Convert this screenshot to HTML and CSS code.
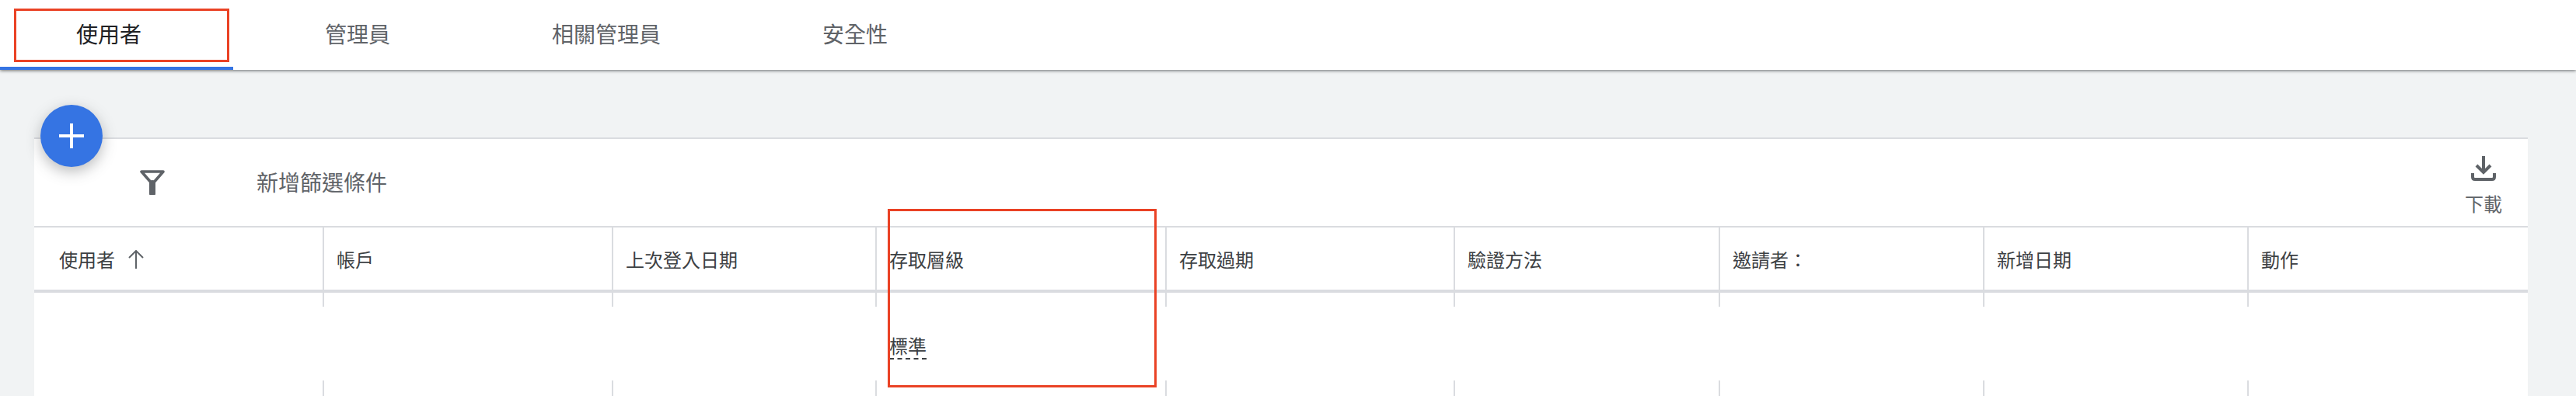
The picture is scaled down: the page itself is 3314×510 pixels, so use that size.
FILE: index.html
```html
<!DOCTYPE html>
<html lang="zh-Hant">
<head>
    <meta charset="UTF-8">
    <title>使用者</title>
    <link rel="stylesheet" href="styles.css">
</head>
<body>
    <nav class="tabs">
        <a class="tab active">使用者</a>
        <a class="tab">管理員</a>
        <a class="tab">相關管理員</a>
        <a class="tab">安全性</a>
    </nav>
    <div class="callout callout-tab"></div>

    <main class="content">
        <button class="fab">
            <svg width="32" height="32" viewBox="0 0 32 32"><path d="M0 16h32M16 0v32" stroke="#fff" stroke-width="4" fill="none"/></svg>
        </button>

        <section class="card">
            <div class="toolbar">
                <svg class="filter-icon" width="32" height="32" viewBox="0 0 32 32">
                    <path d="M2 2h28L16 18z" fill="none" stroke="#5f6368" stroke-width="3.6" stroke-linejoin="round"/>
                    <path d="M16 17v13" stroke="#5f6368" stroke-width="8" stroke-linecap="round" fill="none"/>
                </svg>
                <span class="filter-label">新增篩選條件</span>
                <div class="download">
                    <svg width="32" height="32" viewBox="0 0 32 32">
                        <path d="M16 0v21M7 12l9 9 9-9" fill="none" stroke="#5f6368" stroke-width="4"/>
                        <path d="M2 22v5c0 2 1 3 3 3h22c2 0 3-1 3-3v-5" fill="none" stroke="#5f6368" stroke-width="4"/>
                    </svg>
                    <span>下載</span>
                </div>
            </div>

            <div class="grid head">
                <div class="cell">使用者
                    <svg class="sort-icon" width="22" height="24" viewBox="0 0 22 24"><path d="M11 24V1M2 10l9-9 9 9" fill="none" stroke="#5f6368" stroke-width="2"/></svg>
                </div>
                <div class="cell">帳戶</div>
                <div class="cell">上次登入日期</div>
                <div class="cell">存取層級</div>
                <div class="cell">存取過期</div>
                <div class="cell">驗證方法</div>
                <div class="cell">邀請者：</div>
                <div class="cell">新增日期</div>
                <div class="cell">動作</div>
            </div>

            <div class="grid row">
                <div class="cell"></div>
                <div class="cell"></div>
                <div class="cell"></div>
                <div class="cell"><span class="access">標準</span></div>
                <div class="cell"></div>
                <div class="cell"></div>
                <div class="cell"></div>
                <div class="cell"></div>
                <div class="cell"></div>
            </div>
        </section>
    </main>
    <div class="callout callout-access"></div>
</body>
</html>
```

FILE: styles.css
```css
body {
    margin: 0;
    height: 510px;
    overflow: hidden;
    background-color: #f1f3f4;
    font-family: "Noto Sans CJK TC", "Noto Sans", sans-serif;
    color: #3c4043;
    position: relative;
}

.tabs {
    display: flex;
    height: 90px;
    background: #fff;
    box-shadow: 0 1px 4px rgba(60, 64, 67, 0.75);
    position: relative;
}

.tab {
    width: 280px;
    margin-right: 40px;
    font-size: 28px;
    line-height: 86px;
    text-align: center;
    color: #5f6368;
    position: relative;
}

.tab.active {
    color: #202124;
}

.tab.active::after {
    content: "";
    position: absolute;
    left: 0;
    bottom: 0;
    width: 300px;
    height: 4px;
    background: #3574e3;
}

.callout {
    position: absolute;
    border: 3px solid #ea4225;
    box-sizing: border-box;
}

.callout-tab {
    left: 18px;
    top: 11px;
    width: 277px;
    height: 69px;
}

.callout-access {
    left: 1142px;
    top: 269px;
    width: 346px;
    height: 230px;
}

.content {
    padding: 87px 62px 0 44px;
    position: relative;
}

.fab {
    position: absolute;
    left: 52px;
    top: 45px;
    width: 80px;
    height: 80px;
    border: none;
    border-radius: 50%;
    padding: 0;
    display: flex;
    align-items: center;
    justify-content: center;
    background: #3574e3;
    box-shadow: 0 6px 18px rgba(60, 64, 67, 0.35);
}

.card {
    background: #fff;
    border-top: 2px solid #dadce0;
}

.toolbar {
    height: 112px;
    display: flex;
    border-bottom: 2px solid #dadce0;
}

.filter-icon {
    margin: 40px 0 0 136px;
}

.filter-label {
    margin: 34px 0 0 118px;
    font-size: 28px;
    line-height: 42px;
    color: #5f6368;
}

.download {
    margin-left: auto;
    padding: 22px 33px 0 0;
    display: flex;
    flex-direction: column;
    align-items: center;
    font-size: 24px;
    line-height: 32px;
    color: #5f6368;
}

.download span {
    margin-top: 13px;
}

.grid {
    display: grid;
    grid-template-columns: 371px 372px 339px 373px 371px 341px 340px 340px 361px;
}

.head {
    height: 80px;
    border-bottom: 4px solid #dadce0;
}

.head .cell {
    display: flex;
    align-items: center;
    gap: 16px;
    font-size: 24px;
    padding-left: 16px;
    border-left: 2px solid #dadce0;
}

.head .cell:first-child {
    padding-left: 32px;
    border-left: none;
}

.sort-icon {
    margin-top: 2px;
}

.row {
    height: 133px;
}

.row .cell {
    padding: 52px 0 0 18px;
    font-size: 24px;
    line-height: 32px;
    background-image: linear-gradient(#dadce0, #dadce0), linear-gradient(#dadce0, #dadce0);
    background-size: 2px 18px, 2px 20px;
    background-position: left top, left bottom;
    background-repeat: no-repeat;
}

.row .cell:first-child {
    background-image: none;
}

.access {
    display: inline-block;
    border-bottom: 2px dashed #3c4043;
}
```
